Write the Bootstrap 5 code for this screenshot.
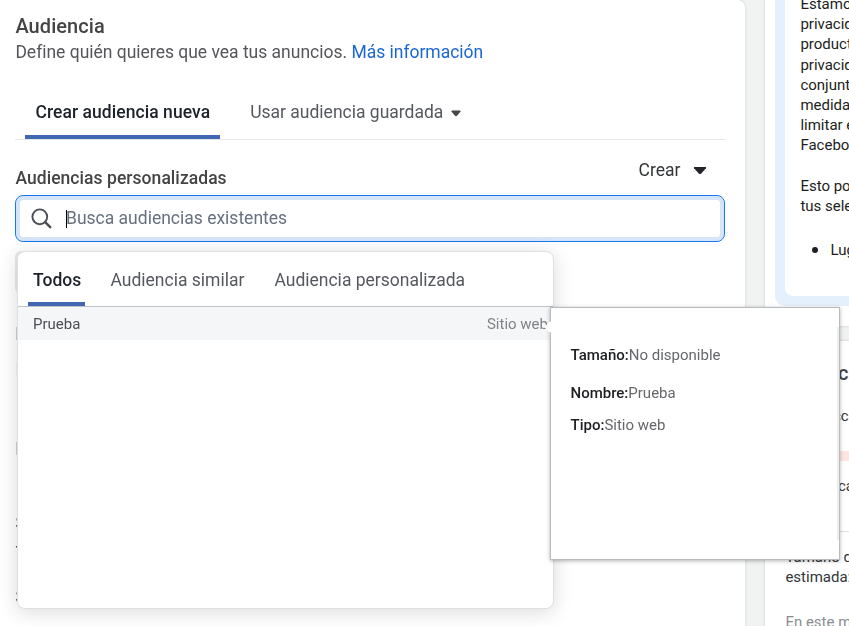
<!DOCTYPE html>
<html lang="es">
<head>
<meta charset="utf-8">
<meta name="viewport" content="width=device-width, initial-scale=1">
<title>Audiencia</title>
<link href="https://cdn.jsdelivr.net/npm/bootstrap@5.3.0/dist/css/bootstrap.min.css" rel="stylesheet">
<style>
body{font-family:Roboto,"Liberation Sans",sans-serif;font-size:17.5px;line-height:25px;color:#55565a;background:#f1f3f3}
.page{height:626px}
.main-panel{width:745px;padding:14px 20px 0 15.4px;border-top-right-radius:8px;box-shadow:0 0 3px rgba(0,0,0,.15)}
.main-panel,.menu-box,.details{will-change:transform}
.title{font-size:20px;font-weight:500;color:#444;line-height:25px;letter-spacing:.07px}
.intro{padding-top:1px;letter-spacing:-.01px}
.more{color:#1b67d2}
.main-tabs{height:55px;margin:20px 0 0 -.4px;border-bottom:1px solid #e4e6e8;padding-left:10px}
.tab-item{border-bottom:4px solid transparent;color:#55585e;white-space:nowrap}
.tab-item.is-on{border-color:#4267b2;color:#1d2129;font-weight:500}
.main-tabs .tab-item{padding:0 10px;line-height:54px;height:54px;margin-right:20px}
.main-tabs .is-on{letter-spacing:.06px;padding-left:10.4px}
.tab-item svg{margin-left:7.5px}
.field-head{height:55px;padding-top:18px}
.field-name{font-weight:500;color:#444;padding-top:8px;letter-spacing:.05px}
.create{color:#333639;padding-right:18px;height:25px}
.create svg{margin-left:12.6px}
.search{height:47px;margin-left:-.4px;border:1px solid #1877f2;border-radius:8px;box-shadow:inset 0 0 0 4px #d6e4f8;padding-left:15px;color:#67707e}
.caret-line{width:1px;height:18px;background:#000;margin-left:14px;margin-right:-1px}
.chip-box{width:30px;height:43px;margin:9px 0 28px -.4px;background:#e9eaec;border-radius:6px}
.row-name{font-weight:500;color:#444}
.row-value{margin:5px 0 19px}
.row-name.first{height:25px}
.row-name.first + .row-value{margin:10px 0 55px}
.menu-box{left:17px;top:251px;width:537px;height:358px;border:1px solid #dddfe2;border-radius:8px;box-shadow:0 3px 20px rgba(0,0,0,.15)}
.menu-tabs{height:55px;border-bottom:1px solid #bec3c9;padding-left:10px}
.menu-tabs .tab-item{padding:0 5px;line-height:56px;height:54px;margin-right:20px}
.menu-tabs .is-on{width:57px;margin-right:20.5px}
.menu-tabs .tab-item:nth-child(2){margin-right:20px}
.result{height:33px;background:#f5f6f8;padding:1px 5px 0 15px;font-size:15px;color:#4b4f56}
.kind{color:#808387}
.details{left:550px;top:307px;width:290px;height:253px;border:1px solid #b9bcbf;box-shadow:0 1px 4px rgba(0,0,0,.3);padding:37px 20px 0 19.5px;font-size:15px;line-height:20px;color:#65676b}
.details strong{font-weight:500;color:#1c1e21}
.details::before{content:"";position:absolute;left:-5px;top:15px;width:8px;height:8px;background:#fff;transform:rotate(45deg)}
.details::after{content:"";position:absolute;right:0;top:19px;width:2px;height:213px;background:#eee}
.fact{margin-bottom:12px}
.fact.wide{margin-bottom:18px}
.side{width:84px;margin-left:20px}
.side-card{box-shadow:0 0 3px rgba(0,0,0,.15);white-space:nowrap;font-size:15px;line-height:20.2px;color:#1c1e21}
.info-card{height:326px}
.notice{margin-left:10px;height:306px;padding:0 0 10px 10px;background:#e5f0fd;border-bottom-left-radius:10px}
.notice-in{height:296px;padding-left:15.4px;background:#fff;border-bottom-left-radius:8px;overflow:hidden}
.notice-text{margin-top:-6px}
.notice-item{margin-top:24px}
.bullet{width:6px;height:6px;border-radius:50%;background:#1c1e21;margin:0 12px}
.estimate{margin-top:15px;height:300px;padding-left:20.4px;color:#333639}
.est-title{font-size:20px;font-weight:500;color:#444;padding-top:22px;letter-spacing:.08px}
.est-copy{margin-top:23px}
.meter{margin-top:25px;height:10px;background:#ffe5e1}
.est-range{margin-top:15px;height:55.4px;border-bottom:1px solid #dddfe2}
.est-size{margin-top:15px}
.est-note{margin-top:25px;color:#8a8d91}
</style>
</head>
<body class="overflow-hidden">
<div class="page d-flex overflow-hidden position-relative">
  <main class="main-panel bg-white flex-shrink-0">
    <h1 class="title m-0">Audiencia</h1>
    <p class="intro m-0">Define quién quieres que vea tus anuncios. <a class="more text-decoration-none" href="#">Más información</a></p>
    <div class="main-tabs d-flex">
      <div class="tab-item is-on">Crear audiencia nueva</div>
      <div class="tab-item">Usar audiencia guardada<svg width="10" height="7" viewBox="0 0 10 7"><path d="M1 .5h8q1 .3.4 1.2L6 5.8q-1 .9-2 0L.6 1.7Q0 .8 1 .5z" fill="#44474b"/></svg></div>
    </div>
    <div class="field-head d-flex justify-content-between">
      <div class="field-name">Audiencias personalizadas</div>
      <div class="create d-flex align-items-center">Crear
        <svg width="14" height="9" viewBox="0 0 14 9"><path d="M1.5 1h11q1.2.3.5 1.3L8.2 7.6q-1.2 1-2.4 0L1 2.3Q.4 1.3 1.5 1z" fill="#222427"/></svg></div>
    </div>
    <div class="search d-flex align-items-center">
      <svg width="21" height="21" viewBox="0 0 21 21" fill="none" stroke="#4b4f56"><circle cx="8.8" cy="8.8" r="7.4" stroke-width="1.9"/><path d="M14.2 14.2l5 5" stroke-width="2.5" stroke-linecap="round"/></svg>
      <span class="caret-line"></span><span>Busca audiencias existentes</span>
    </div>
    <div class="chip-box"></div>
    <div class="row-name first">Lugares</div>
    <div class="row-value">Lugar:</div>
    <div class="row-name">Edad</div>
    <div class="row-value">18</div>
    <div class="row-name">Sexo</div>
    <div class="row-value">Todos</div>
    <div class="row-name">Segmentación</div>
  </main>

  <aside class="side flex-shrink-0">
    <section class="side-card info-card bg-white overflow-hidden">
      <div class="notice">
        <div class="notice-in">
          <div class="notice-text">Estamos<br>privacidad<br>productos<br>privacidad<br>conjuntos<br>medidas<br>limitar el<br>Facebook.<br><br>Esto podría<br>tus selecciones</div>
          <div class="notice-item d-flex align-items-center"><span class="bullet flex-shrink-0"></span>Lugares</div>
        </div>
      </div>
    </section>
    <section class="side-card estimate bg-white overflow-hidden">
      <div class="est-title">Definición</div>
      <div class="est-copy">Tu selección</div>
      <div class="meter"></div>
      <div class="est-range">Específica</div>
      <div class="est-size">Tamaño de<br>estimada:</div>
      <div class="est-note">En este momento</div>
    </section>
  </aside>

  <div class="menu-box bg-white position-absolute overflow-hidden">
    <div class="menu-tabs d-flex">
      <div class="tab-item is-on">Todos</div>
      <div class="tab-item">Audiencia similar</div>
      <div class="tab-item">Audiencia personalizada</div>
    </div>
    <div class="result d-flex justify-content-between align-items-center"><span>Prueba</span><span class="kind">Sitio web</span></div>
  </div>

  <div class="details bg-white position-absolute">
    <div class="fact wide"><strong>Tamaño:</strong>No disponible</div>
    <div class="fact"><strong>Nombre:</strong>Prueba</div>
    <div><strong>Tipo:</strong>Sitio web</div>
  </div>
</div>
</body>
</html>
